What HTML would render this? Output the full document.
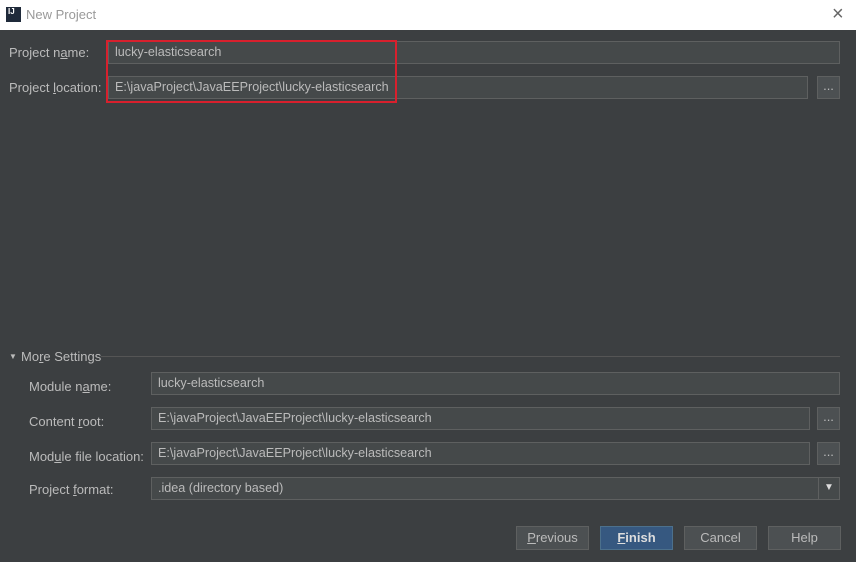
<!DOCTYPE html>
<html><head><style>
body{margin:0;width:856px;height:562px;background:#3c3f41;font-family:"Liberation Sans",sans-serif;font-size:13px;color:#bbbbbb;position:relative;overflow:hidden}
.a{position:absolute}
.f{position:absolute;background:#45494a;border:1px solid #5e6060;box-sizing:border-box;height:23px;line-height:21px;padding-left:6px;color:#bbbbbb;font-size:12.6px}
.b{position:absolute;background:#4c5052;border:1px solid #5e6060;box-sizing:border-box;width:23px;height:23px;text-align:center;line-height:17px;color:#bbb}
.btn{position:absolute;top:525px;height:24px;width:73px;box-sizing:border-box;border:1px solid #5e6060;background:#4c5052;text-align:center;line-height:22px;font-size:13px;color:#bbb}
u{text-decoration:underline}
</style></head><body>
<div class="a" style="left:0;top:0;width:856px;height:30px;background:#fff"></div>
<div class="a" style="left:6px;top:7px;width:15px;height:15px;background:#1f2a3a;color:#fff;font-size:8px;font-weight:bold;line-height:10px;padding-left:2px;box-sizing:border-box">IJ</div>
<div class="a" style="left:26px;top:7px;color:#999;font-size:13px">New Project</div>
<div class="a" style="left:832px;top:3px;color:#666;font-size:20px">×</div>

<div class="a" style="left:9px;top:45px">Project n<u>a</u>me:</div>
<div class="f" style="left:108px;top:41px;width:732px">lucky-elasticsearch</div>
<div class="a" style="left:9px;top:80px">Project <u>l</u>ocation:</div>
<div class="f" style="left:108px;top:76px;width:700px">E:\javaProject\JavaEEProject\lucky-elasticsearch</div>
<div class="b" style="left:817px;top:76px">...</div>
<div class="a" style="left:106px;top:40px;width:291px;height:63px;border:2px solid #d8202d;box-sizing:border-box"></div>

<div class="a" style="left:9px;top:352px;font-size:8px">▼</div>
<div class="a" style="left:21px;top:349px">Mo<u>r</u>e Settings</div>
<div class="a" style="left:101px;top:356px;width:739px;height:1px;background:#555"></div>

<div class="a" style="left:29px;top:379px">Module n<u>a</u>me:</div>
<div class="f" style="left:151px;top:372px;width:689px">lucky-elasticsearch</div>
<div class="a" style="left:29px;top:414px">Content <u>r</u>oot:</div>
<div class="f" style="left:151px;top:407px;width:659px">E:\javaProject\JavaEEProject\lucky-elasticsearch</div>
<div class="b" style="left:817px;top:407px">...</div>
<div class="a" style="left:29px;top:449px">Mod<u>u</u>le file location:</div>
<div class="f" style="left:151px;top:442px;width:659px">E:\javaProject\JavaEEProject\lucky-elasticsearch</div>
<div class="b" style="left:817px;top:442px">...</div>
<div class="a" style="left:29px;top:482px">Project <u>f</u>ormat:</div>
<div class="f" style="left:151px;top:477px;width:689px">.idea (directory based)</div>
<div class="a" style="left:818px;top:478px;width:1px;height:21px;background:#5e6060"></div>
<div class="a" style="left:824px;top:482px;font-size:10px;color:#ddd">▼</div>

<div class="btn" style="left:516px;top:526px"><u>P</u>revious</div>
<div class="btn" style="left:600px;top:526px;background:#365880;border-color:#4c708c;color:#ddd;font-weight:bold"><u>F</u>inish</div>
<div class="btn" style="left:684px;top:526px">Cancel</div>
<div class="btn" style="left:768px;top:526px">Help</div>
</body></html>
